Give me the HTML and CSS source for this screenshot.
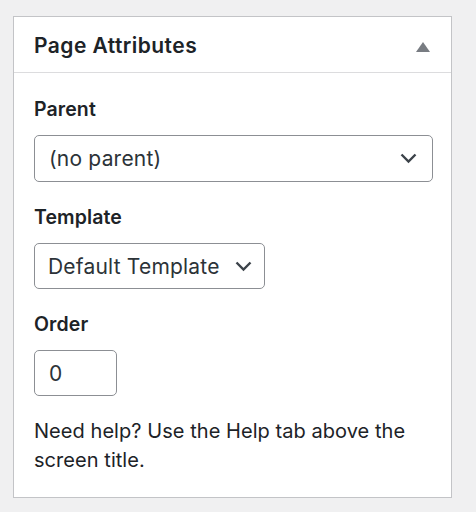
FILE: index.html
```html
<!DOCTYPE html>
<html lang="en">
<head>
<meta charset="utf-8">
<title>Page Attributes</title>
<link rel="stylesheet" href="styles.css">
</head>
<body>
<div class="postbox">
  <div class="postbox-header">
    <h2 class="postbox-title">Page Attributes</h2>
    <svg class="toggle-icon" width="14" height="10" viewBox="0 0 14 10" aria-hidden="true"><polygon points="7,0 14,10 0,10" fill="#787c82"/></svg>
  </div>
  <div class="inside">
    <p class="field-label">Parent</p>
    <div class="select select-wide">
      <span class="select-text">(no parent)</span>
      <svg class="chevron" width="17" height="11" viewBox="0 0 17 11" aria-hidden="true"><polyline points="1.5,1.5 8.5,8.5 15.5,1.5" fill="none" stroke="#3c434a" stroke-width="2.4"/></svg>
    </div>
    <p class="field-label">Template</p>
    <div class="select select-fit">
      <span class="select-text">Default Template</span>
      <svg class="chevron" width="17" height="11" viewBox="0 0 17 11" aria-hidden="true"><polyline points="1.5,1.5 8.5,8.5 15.5,1.5" fill="none" stroke="#3c434a" stroke-width="2.4"/></svg>
    </div>
    <p class="field-label">Order</p>
    <div class="number-input"><span class="select-text">0</span></div>
    <p class="help-text">Need help? Use the Help tab above the screen title.</p>
  </div>
</div>
</body>
</html>
```
FILE: styles.css
```css
html, body {
  margin: 0;
  padding: 0;
}
body {
  background: #f0f0f1;
  font-family: Inter, "Liberation Sans", sans-serif;
  color: #1d2327;
  padding: 16px 0 0 13px;
}
.postbox {
  width: 437px;
  background: #fff;
  border: 1px solid #c3c4c7;
}
.postbox-header {
  height: 55px;
  border-bottom: 1px solid #dcdcde;
  display: flex;
  align-items: center;
  justify-content: space-between;
  padding: 0 21px 0 20px;
}
.postbox-title {
  margin: 0;
  font-size: 21px;
  font-weight: 600;
  letter-spacing: 0.45px;
  line-height: 28px;
  padding-top: 3px;
}
.toggle-icon {
  display: block;
  margin-top: 5px;
}
.inside {
  display: flex;
  flex-direction: column;
  align-items: flex-start;
  padding: 0 18px 23px 20px;
}
.field-label {
  margin: 21px 0 12px;
  font-size: 19.5px;
  font-weight: 600;
  line-height: 28px;
  letter-spacing: 0.1px;
}
.inside .field-label:first-child {
  margin-top: 22px;
}
.select, .number-input {
  box-sizing: border-box;
  height: 47px;
  border: 1px solid #8c8f94;
  border-radius: 5px;
  display: flex;
  align-items: center;
  font-size: 21px;
  letter-spacing: 0.2px;
  line-height: 28px;
  color: #2c3338;
}
.select-text {
  padding-top: 1px;
}
.select-wide {
  align-self: stretch;
  justify-content: space-between;
  padding: 0 15px 0 14px;
}
.select-fit {
  height: 46px;
  gap: 15px;
  padding: 0 12px 0 13px;
}
.number-input {
  height: 46px;
  width: 83px;
  padding: 0 14px;
}
.chevron {
  display: block;
}
.help-text {
  margin: 21px 0 0;
  font-size: 20px;
  letter-spacing: 0.05px;
  line-height: 28.5px;
  width: 400px;
}
```
